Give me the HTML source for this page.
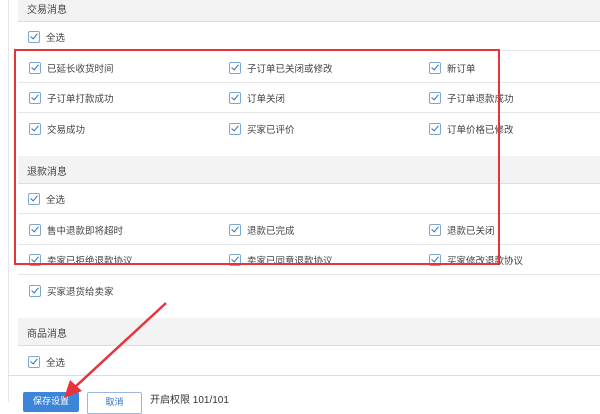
<html><head><style>
body{margin:0;width:600px;height:402px;overflow:hidden;background:#fff;font-family:"Liberation Sans","Noto Sans CJK SC",sans-serif;font-size:9px;color:#333;position:relative}
.a{position:absolute}
.h{position:absolute;left:18px;right:0;background:#f3f3f3;border-bottom:1px solid #ddd}
.h span{position:absolute;left:9px;font-size:10px;color:#444}
.ln{position:absolute;left:18px;right:0;height:1px;background:#e6e6e6}
.cb{position:absolute;width:10px;height:10px;border:1px solid #7aa7d6;border-radius:2px;background:#fff}
.cb:after{content:"";position:absolute;left:3px;top:0px;width:3px;height:6px;border:solid #2d6fc0;border-width:0 1.5px 1.5px 0;transform:rotate(40deg)}
.t{position:absolute;font-size:9.5px;color:#444;white-space:nowrap}
</style></head><body>
<div class="a" style="left:8px;top:0;width:1px;height:402px;background:#e3e6ea"></div>
<div class="h" style="top:0;height:21px"><span style="top:1px">交易消息</span></div>
<div class="ln" style="top:50px"></div>
<div class="ln" style="top:82px"></div>
<div class="ln" style="top:112px"></div>
<div class="h" style="top:156px;height:27px"><span style="top:7px">退款消息</span></div>
<div class="ln" style="top:213px"></div>
<div class="ln" style="top:244px"></div>
<div class="ln" style="top:274px"></div>
<div class="h" style="top:318px;height:27px"><span style="top:7px">商品消息</span></div>
<div class="a" style="left:8px;right:0;top:375px;height:1px;background:#ddd"></div>

<div class="cb" style="left:28px;top:31px"></div><div class="t" style="left:46px;top:30px">全选</div>
<div class="cb" style="left:29px;top:62px"></div><div class="t" style="left:47px;top:61px">已延长收货时间</div>
<div class="cb" style="left:229px;top:62px"></div><div class="t" style="left:247px;top:61px">子订单已关闭或修改</div>
<div class="cb" style="left:429px;top:62px"></div><div class="t" style="left:447px;top:61px">新订单</div>
<div class="cb" style="left:29px;top:92px"></div><div class="t" style="left:47px;top:91px">子订单打款成功</div>
<div class="cb" style="left:229px;top:92px"></div><div class="t" style="left:247px;top:91px">订单关闭</div>
<div class="cb" style="left:429px;top:92px"></div><div class="t" style="left:447px;top:91px">子订单退款成功</div>
<div class="cb" style="left:29px;top:123px"></div><div class="t" style="left:47px;top:122px">交易成功</div>
<div class="cb" style="left:229px;top:123px"></div><div class="t" style="left:247px;top:122px">买家已评价</div>
<div class="cb" style="left:429px;top:123px"></div><div class="t" style="left:447px;top:122px">订单价格已修改</div>
<div class="cb" style="left:28px;top:193px"></div><div class="t" style="left:46px;top:192px">全选</div>
<div class="cb" style="left:29px;top:224px"></div><div class="t" style="left:47px;top:223px">售中退款即将超时</div>
<div class="cb" style="left:229px;top:224px"></div><div class="t" style="left:247px;top:223px">退款已完成</div>
<div class="cb" style="left:429px;top:224px"></div><div class="t" style="left:447px;top:223px">退款已关闭</div>
<div class="cb" style="left:29px;top:254px"></div><div class="t" style="left:47px;top:253px">卖家已拒绝退款协议</div>
<div class="cb" style="left:229px;top:254px"></div><div class="t" style="left:247px;top:253px">卖家已同意退款协议</div>
<div class="cb" style="left:429px;top:254px"></div><div class="t" style="left:447px;top:253px">买家修改退款协议</div>
<div class="cb" style="left:29px;top:285px"></div><div class="t" style="left:47px;top:284px">买家退货给卖家</div>
<div class="cb" style="left:28px;top:356px"></div><div class="t" style="left:46px;top:355px">全选</div>

<div class="a" style="left:14px;top:49px;width:482px;height:212px;border:2px solid #e8333a"></div>

<div class="a" style="left:23px;top:392px;width:56px;height:20px;background:#3d85d8;border-radius:2px;color:#fff;font-size:9px;text-align:center;line-height:18px">保存设置</div>
<div class="a" style="left:87px;top:392px;width:53px;height:20px;border:1px solid #9bb8dc;border-radius:2px;color:#2d6fc0;font-size:9px;text-align:center;line-height:18px">取消</div>
<div class="t" style="left:150px;top:391px;font-size:10px;color:#333">开启权限 101/101</div>

<svg class="a" style="left:0;top:0" width="600" height="402"><line x1="166" y1="303" x2="74" y2="388" stroke="#e8333a" stroke-width="2.5"/><polygon points="64,398 70,380 82,391" fill="#e8333a"/></svg>
</body></html>
